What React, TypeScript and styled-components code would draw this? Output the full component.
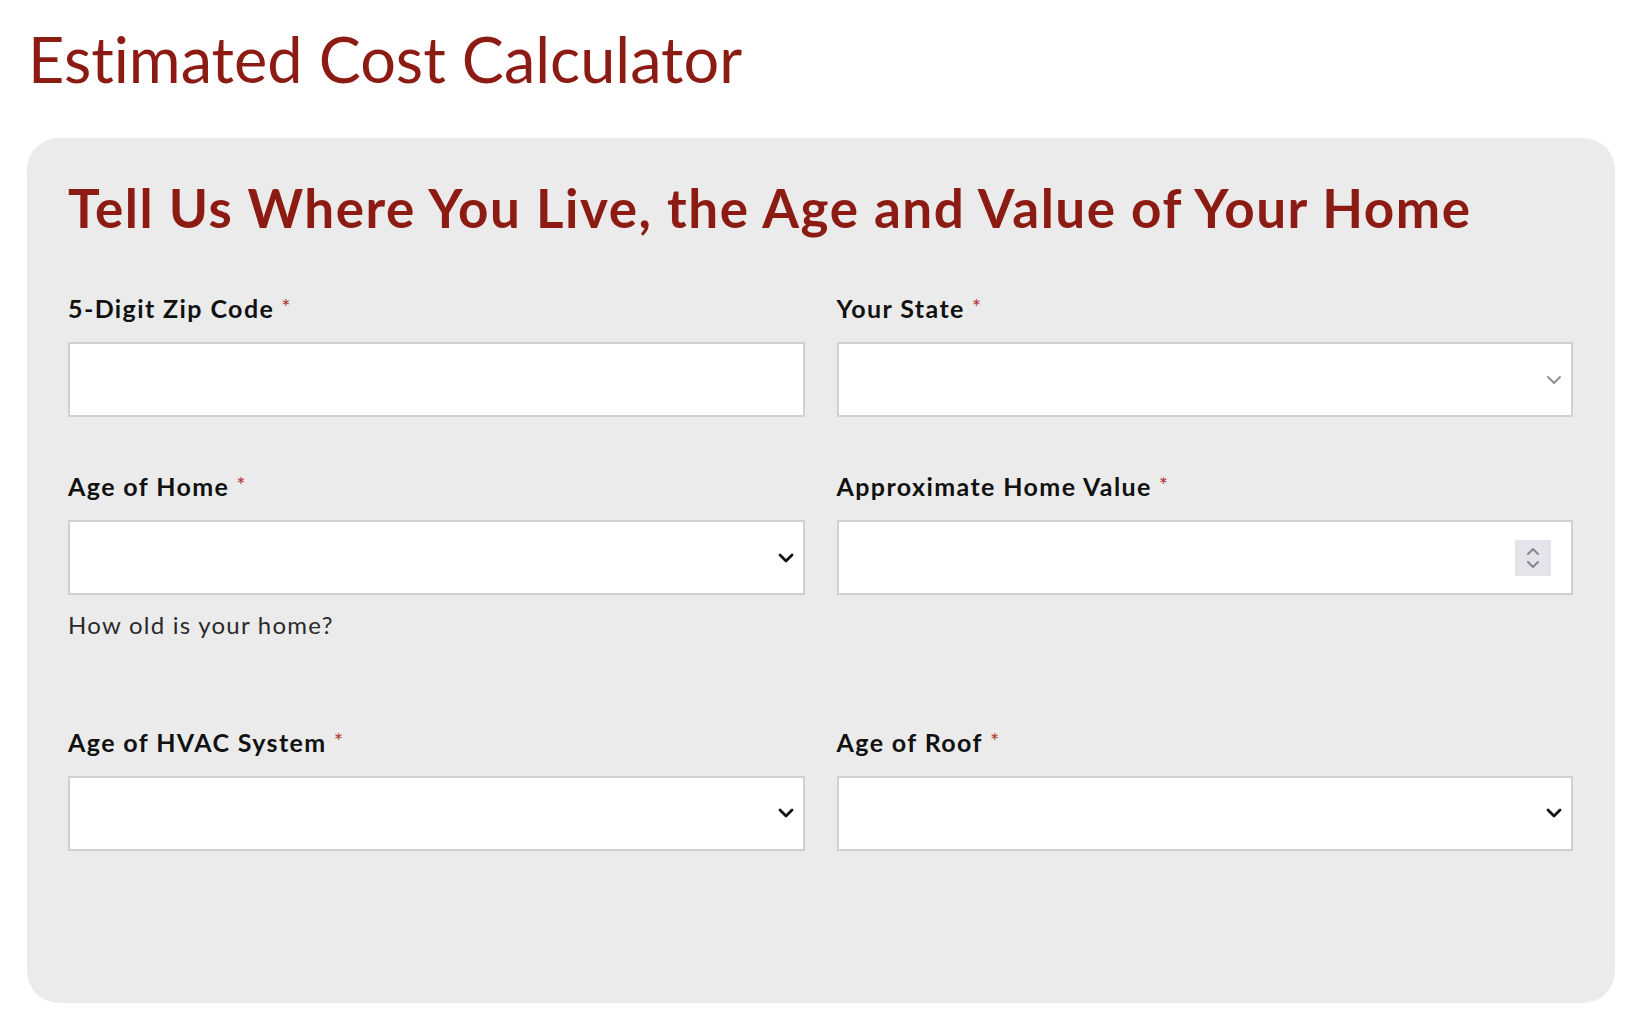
import React, { FunctionComponent } from "react";
import styled, { createGlobalStyle } from "styled-components";

const GlobalStyle = createGlobalStyle`
	html, body {
		margin: 0;
		padding: 0;
		background: #ffffff;
	}
	body {
		font-family: "Lato", "Liberation Sans", sans-serif;
		font-variant-ligatures: none;
	}
`;

const Page = styled.div`
	padding: 21px 29px 28px 27px;
`;

const Title = styled.h1`
	margin: 0 0 41px 1px;
	font-family: "Lato", sans-serif;
	font-weight: 400;
	font-size: 63px;
	line-height: 1.2;
	color: #8c1b13;
	font-variant-ligatures: none;
`;

const Panel = styled.section`
	background: #ebebeb;
	border-radius: 32px;
	padding: 38px 42px 152px 41px;
`;

const Heading = styled.h2`
	margin: 0 0 54px 0;
	font-family: "Lato", sans-serif;
	font-weight: 700;
	font-size: 53px;
	line-height: 1.2;
	letter-spacing: 1.55px;
	color: #8c1b13;
`;

const Grid = styled.div`
	display: grid;
	grid-template-columns: 1fr 1fr;
	column-gap: 32px;
	row-gap: 54px;
`;

const Field = styled.div`
	display: flex;
	flex-direction: column;
`;

const Label = styled.label`
	font-family: "Lato", sans-serif;
	font-weight: 700;
	font-size: 25px;
	line-height: 1.2;
	color: #111;
	margin-bottom: 19px;
	letter-spacing: 1.4px;
`;

const Required = styled.span`
	color: #b03a30;
	font-weight: 400;
	font-size: 22px;
	margin-left: 7px;
	vertical-align: 3px;
`;

const Control = styled.div`
	position: relative;
	height: 75px;
`;

const TextBox = styled.input`
	box-sizing: border-box;
	width: 100%;
	height: 100%;
	border: 2px solid #d0d0d0;
	background: #fff;
	padding: 0 60px 0 16px;
	font-size: 22px;
	font-family: "Lato", sans-serif;
	outline: none;
	appearance: none;
	-moz-appearance: textfield;
	&::-webkit-inner-spin-button,
	&::-webkit-outer-spin-button {
		-webkit-appearance: none;
		margin: 0;
	}
`;

const SelectBox = styled.select`
	box-sizing: border-box;
	width: 100%;
	height: 100%;
	border: 2px solid #d0d0d0;
	border-radius: 0;
	background: #fff;
	padding: 0 60px 0 16px;
	font-size: 22px;
	font-family: "Lato", sans-serif;
	outline: none;
	appearance: none;
	-webkit-appearance: none;
`;

const Chevron = styled.svg<{ $light?: boolean }>`
	position: absolute;
	right: 11px;
	top: 50%;
	transform: translateY(-50%);
	width: 16px;
	height: 10px;
	pointer-events: none;
	fill: none;
	stroke: ${(p) => (p.$light ? "#8e8e8e" : "#111")};
	stroke-width: ${(p) => (p.$light ? "1.8" : "2.8")};
	stroke-linecap: round;
	stroke-linejoin: round;
`;

const Spinner = styled.div`
	position: absolute;
	right: 22px;
	top: 50%;
	transform: translateY(-50%);
	width: 36px;
	height: 36px;
	background: #e4e4ea;
	display: flex;
	flex-direction: column;
	align-items: center;
	justify-content: center;
	gap: 6px;
	pointer-events: none;
`;

const SpinArrow = styled.svg`
	width: 14px;
	height: 8px;
	fill: none;
	stroke: #86868e;
	stroke-width: 2;
	stroke-linecap: round;
	stroke-linejoin: round;
`;

const Help = styled.div`
	font-family: "Lato", sans-serif;
	font-size: 24px;
	line-height: 1.2;
	color: #2a2a2a;
	margin-top: 16px;
	margin-bottom: 33px;
	letter-spacing: 1.25px;
`;

interface IFieldProps {
	label: string;
	help?: string;
	children?: React.ReactNode;
}

const DownArrow: FunctionComponent<{ light?: boolean }> = ({ light }) => (
	<Chevron $light={light} viewBox="0 0 16 10">
		<polyline points="2,2 8,8 14,2" />
	</Chevron>
);

const FieldBlock: FunctionComponent<IFieldProps> = ({ label, help, children }) => (
	<Field>
		<Label>
			{label}
			<Required>*</Required>
		</Label>
		<Control>{children}</Control>
		{help && <Help>{help}</Help>}
	</Field>
);

const EmptySelect: FunctionComponent<{ light?: boolean }> = ({ light }) => (
	<>
		<SelectBox defaultValue="">
			<option value=""></option>
		</SelectBox>
		<DownArrow light={light} />
	</>
);

const App: FunctionComponent = (): JSX.Element => {
	return (
		<Page>
			<GlobalStyle />
			<Title>Estimated Cost Calculator</Title>
			<Panel>
				<Heading>Tell Us Where You Live, the Age and Value of Your Home</Heading>
				<Grid>
					<FieldBlock label="5-Digit Zip Code">
						<TextBox type="text" />
					</FieldBlock>
					<FieldBlock label="Your State">
						<EmptySelect light />
					</FieldBlock>
					<FieldBlock label="Age of Home" help="How old is your home?">
						<EmptySelect />
					</FieldBlock>
					<FieldBlock label="Approximate Home Value">
						<TextBox type="number" />
						<Spinner>
							<SpinArrow viewBox="0 0 14 8">
								<polyline points="2,7 7,2 12,7" />
							</SpinArrow>
							<SpinArrow viewBox="0 0 14 8">
								<polyline points="2,1 7,6 12,1" />
							</SpinArrow>
						</Spinner>
					</FieldBlock>
					<FieldBlock label="Age of HVAC System">
						<EmptySelect />
					</FieldBlock>
					<FieldBlock label="Age of Roof">
						<EmptySelect />
					</FieldBlock>
				</Grid>
			</Panel>
		</Page>
	);
};

export default App;
